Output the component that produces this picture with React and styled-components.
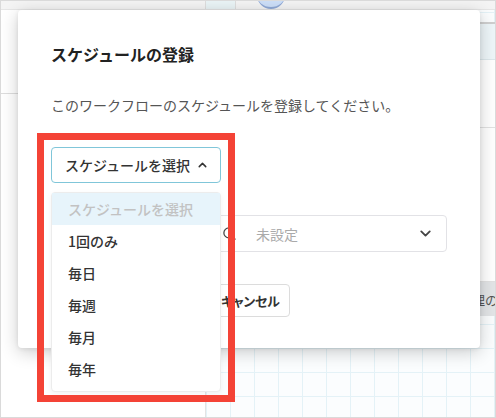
import styled, { createGlobalStyle } from "styled-components";
import { ChevronUp, ChevronDown, Search } from "lucide-react";

const GlobalStyle = createGlobalStyle`
  html, body {
    margin: 0;
    padding: 0;
    background: #ffffff;
  }
  body {
    font-family: "Noto Sans CJK JP", "Noto Sans", sans-serif;
    color: #333;
  }
  * {
    box-sizing: border-box;
  }
`;

const Frame = styled.div`
  position: relative;
  width: 496px;
  height: 418px;
  border: 1px solid #dadada;
  overflow: hidden;
  display: flex;
  flex-direction: column;
  background: #ffffff;
`;

const TopBar = styled.div`
  position: relative;
  height: 9px;
  flex: none;
  display: flex;
  background: #f4f4f4;
  border-bottom: 1px solid #e6e6e6;
`;

const TopSegment = styled.div`
  width: ${(p) => p.w}px;
  flex: none;
  background: ${(p) => p.bg || "transparent"};
  border-right: 1px solid #dedede;
`;

const Avatar = styled.div`
  position: absolute;
  left: 256px;
  top: -20px;
  width: 28px;
  height: 28px;
  border-radius: 50%;
  background: #cddff8;
  border-bottom: 2px solid #8fa9d6;
`;

const Workspace = styled.div`
  flex: 1;
  display: flex;
`;

const SidePanel = styled.div`
  width: 205px;
  flex: none;
  background: #ffffff;
  border-right: 1px solid #e3e3e3;
`;

const SideSection = styled.div`
  height: 84px;
  border-bottom: 1px solid #dddddd;
`;

const Canvas = styled.div`
  flex: 1;
  background-color: #fbfdfe;
  background-image: linear-gradient(#e4f2f7 1px, transparent 1px),
    linear-gradient(90deg, #e4f2f7 1px, transparent 1px);
  background-size: 24px 24px;
  background-position: 0 2px;
  padding: 12px 0 0 24px;
`;

const Table = styled.div`
  width: 289px;
  background: #ffffff;
  display: flex;
  flex-direction: column;
`;

const TableHead = styled.div`
  height: 38px;
  background: #eef6f9;
  border-top: 2px solid #cfcfcf;
  border-bottom: 1px solid #dde8ec;
`;

const TableRow = styled.div`
  height: ${(p) => p.h}px;
  border-bottom: 1px solid #e2e2e2;
`;

const TableFoot = styled.div`
  height: 34px;
  background: #e3e5e7;
  display: flex;
  align-items: center;
  justify-content: flex-end;
  padding-right: 8px;
  font-size: 13px;
  color: #555;
  white-space: nowrap;
`;

const Dialog = styled.div`
  position: absolute;
  left: 17px;
  top: 9px;
  width: 462px;
  padding: 33px 33px 31px;
  background: #ffffff;
  border-radius: 4px;
  box-shadow: 0 4px 18px rgba(0, 0, 0, 0.2), 0 1px 4px rgba(0, 0, 0, 0.08);
  display: flex;
  flex-direction: column;
`;

const Title = styled.h2`
  margin: 0 0 30px;
  font-size: 16px;
  line-height: 22px;
  font-weight: 700;
  color: #222;
`;

const Description = styled.p`
  margin: 0 0 32px;
  font-size: 14px;
  line-height: 20px;
  color: #555;
`;

const SelectWrap = styled.div`
  position: relative;
  width: 170px;
  height: 36px;
`;

const SelectButton = styled.button`
  width: 100%;
  height: 100%;
  display: flex;
  align-items: center;
  gap: 6px;
  padding: 0 11px 0 13px;
  border: 1px solid ${(p) => (p.open ? "#80c6d9" : "#dddddd")};
  border-radius: 4px;
  background: #ffffff;
  font-family: inherit;
  font-size: 14px;
  font-weight: 500;
  color: #333;
  white-space: nowrap;
`;

const Menu = styled.ul`
  position: absolute;
  top: calc(100% + 9px);
  left: 0;
  width: 170px;
  margin: 0;
  padding: 0 0 6px;
  list-style: none;
  background: #ffffff;
  border: 1px solid #ececec;
  border-radius: 4px;
  box-shadow: 0 2px 6px rgba(0, 0, 0, 0.05);
  z-index: 2;
`;

const MenuItem = styled.li`
  height: 32px;
  display: flex;
  align-items: center;
  padding-left: 16px;
  font-size: 14px;
  font-weight: 500;
  color: ${(p) => (p.placeholder ? "#c2c2c2" : "#333")};
  background: ${(p) => (p.placeholder ? "#e7f4fb" : "transparent")};
`;

const FieldRow = styled.div`
  margin-top: 32px;
  height: 37px;
  display: flex;
  gap: 10px;
`;

const DateField = styled.div`
  width: 149px;
  flex: none;
  border: 1px solid #e2e2e6;
  border-radius: 4px;
`;

const SearchSelect = styled.div`
  flex: 1;
  display: flex;
  align-items: center;
  padding: 0 12px 0 11px;
  border: 1px solid #e2e2e6;
  border-radius: 4px;
  color: #444;
`;

const Placeholder = styled.span`
  flex: 1;
  margin-left: 19px;
  font-size: 14px;
  color: #aaaaaa;
`;

const Actions = styled.div`
  margin-top: 32px;
  height: 33px;
  display: flex;
  gap: 8px;
`;

const Button = styled.button`
  height: 100%;
  padding: 0 9px;
  border-radius: 4px;
  font-family: inherit;
  font-size: 13px;
  font-weight: 700;
  letter-spacing: -0.3px;
  font-feature-settings: "palt";
  border: 1px solid ${(p) => (p.primary ? "#2f8fd8" : "#dcdcdc")};
  background: ${(p) => (p.primary ? "#2f8fd8" : "#ffffff")};
  color: ${(p) => (p.primary ? "#ffffff" : "#333")};
  width: ${(p) => (p.primary ? "152px" : "auto")};
`;

const Highlight = styled.div`
  position: absolute;
  left: 36px;
  top: 132px;
  width: 198px;
  height: 269px;
  border: 7px solid #f44336;
  z-index: 5;
  pointer-events: none;
`;

const options = ["1回のみ", "毎日", "毎週", "毎月", "毎年"];

const App = () => {
  return (
    <>
      <GlobalStyle />
      <Frame>
        <TopBar>
          <TopSegment w={205} />
          <TopSegment w={30} bg="#eaf4f6" />
          <Avatar />
        </TopBar>
        <Workspace>
          <SidePanel>
            <SideSection />
          </SidePanel>
          <Canvas>
            <Table>
              <TableHead />
              <TableRow h={68} />
              <TableRow h={154} />
              <TableFoot>処理の約</TableFoot>
            </Table>
          </Canvas>
        </Workspace>

        <Dialog>
          <Title>スケジュールの登録</Title>
          <Description>このワークフローのスケジュールを登録してください。</Description>
          <SelectWrap>
            <SelectButton open>
              スケジュールを選択
              <ChevronUp size={18} strokeWidth={2.8} />
            </SelectButton>
            <Menu>
              <MenuItem placeholder>スケジュールを選択</MenuItem>
              {options.map((o) => (
                <MenuItem key={o}>{o}</MenuItem>
              ))}
            </Menu>
          </SelectWrap>
          <FieldRow>
            <DateField />
            <SearchSelect>
              <Search size={15} strokeWidth={2} />
              <Placeholder>未設定</Placeholder>
              <ChevronDown size={17} strokeWidth={2.6} />
            </SearchSelect>
          </FieldRow>
          <Actions>
            <Button primary>登録</Button>
            <Button>キャンセル</Button>
          </Actions>
        </Dialog>

        <Highlight />
      </Frame>
    </>
  );
};

export default App;
